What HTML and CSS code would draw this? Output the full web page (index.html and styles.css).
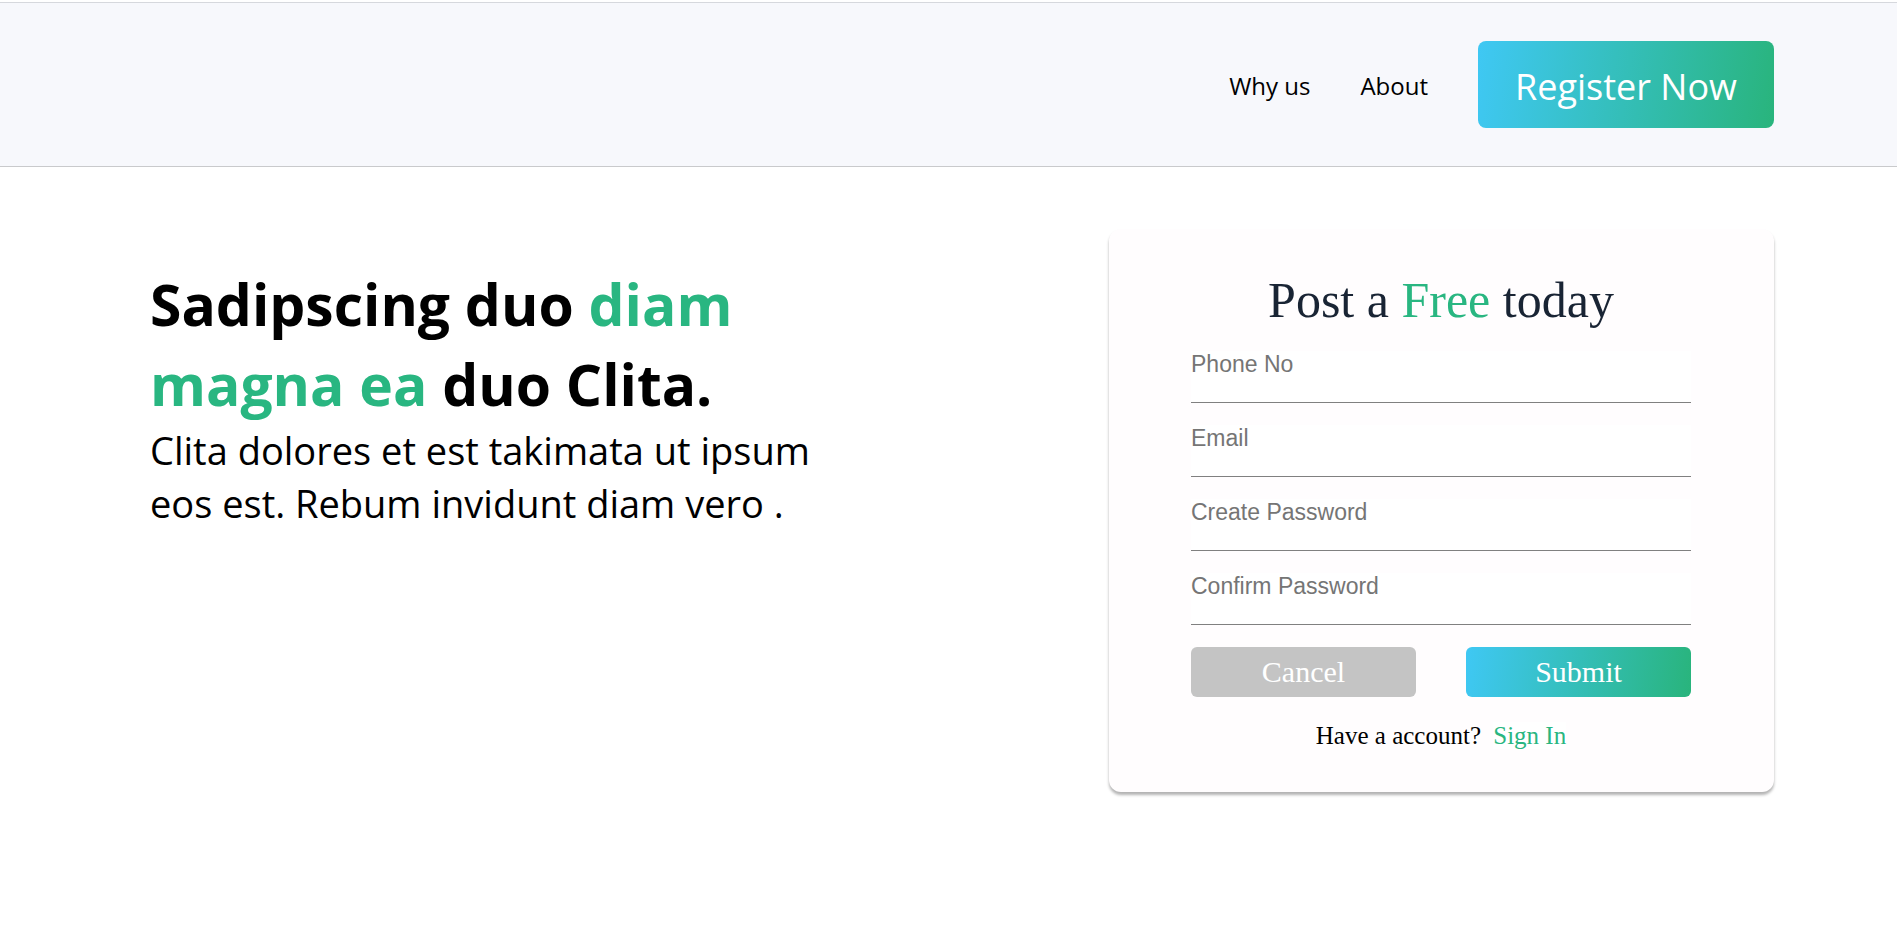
FILE: index.html
```html
<!DOCTYPE html>
<html lang="en">
<head>
<meta charset="utf-8">
<meta name="viewport" content="width=device-width, initial-scale=1">
<title>Post a Free today</title>
<link rel="stylesheet" href="styles.css">
</head>
<body>
<header class="navbar">
  <nav class="nav-links">
    <a class="nav-link" href="#why">Why us</a>
    <a class="nav-link" href="#about">About</a>
  </nav>
  <button class="register" type="button">Register Now</button>
</header>
<main class="hero">
  <section class="intro">
    <h1 class="headline">Sadipscing duo <span class="accent">diam magna ea</span> duo Clita.</h1>
    <p class="lead">Clita dolores et est takimata ut ipsum eos est. Rebum invidunt diam vero .</p>
  </section>
  <form class="card">
    <h2 class="card-title">Post a <span class="accent">Free</span> today</h2>
    <input class="field" type="tel" placeholder="Phone No" aria-label="Phone No">
    <input class="field" type="email" placeholder="Email" aria-label="Email">
    <input class="field" type="password" placeholder="Create Password" aria-label="Create Password">
    <input class="field" type="password" placeholder="Confirm Password" aria-label="Confirm Password">
    <div class="actions">
      <button class="action cancel" type="button">Cancel</button>
      <button class="action submit" type="submit">Submit</button>
    </div>
    <p class="signin">Have a account? <a class="signin-link" href="#signin">Sign In</a></p>
  </form>
</main>
</body>
</html>
```
FILE: styles.css
```css
* {
  box-sizing: border-box;
  margin: 0;
  padding: 0;
}

body {
  background: #fff;
  color: #000;
  font-family: "Segoe UI", "Open Sans", "Noto Sans", sans-serif;
  padding-top: 2px;
}

.navbar {
  display: flex;
  align-items: center;
  justify-content: flex-end;
  gap: 50px;
  padding: 38px 123px;
  background: #f7f8fc;
  border-top: 1px solid #d6d8dd;
  border-bottom: 1px solid #c9cacc;
}

.nav-links {
  display: flex;
  gap: 50px;
  padding-top: 2px;
}

.nav-link {
  color: #000;
  font-size: 24px;
  line-height: 32px;
  text-decoration: none;
}

.register {
  padding: 22px 37px 18px;
  border: 0;
  border-radius: 8px;
  background: linear-gradient(98deg, #3fc8f4, #29b47c);
  color: #fff;
  font-family: inherit;
  font-size: 36px;
  line-height: 47px;
}

.hero {
  display: flex;
  align-items: flex-start;
  justify-content: space-between;
  padding: 62px 123px 62px 150px;
}

.intro {
  width: 680px;
  padding-top: 35px;
}

.headline {
  font-size: 57px;
  font-weight: 700;
  line-height: 80px;
}

.accent {
  color: #29b681;
}

.lead {
  font-size: 38px;
  line-height: 53px;
}

.card {
  width: 665px;
  padding: 42px 83px 42px 82px;
  border-radius: 12px;
  background: #fffdfe;
  box-shadow: 0 3px 3px rgba(0, 0, 0, 0.3);
  font-family: "Liberation Serif", "Times New Roman", serif;
}

.card-title {
  margin-bottom: 22px;
  color: #192434;
  font-size: 50px;
  font-weight: 400;
  line-height: 58px;
  text-align: center;
}

.field {
  display: block;
  width: 100%;
  height: 52px;
  margin-bottom: 22px;
  padding-bottom: 25px;
  border: 0;
  border-bottom: 1px solid #808080;
  background: #fff;
  color: #000;
  font-family: "Liberation Sans", Arial, sans-serif;
  font-size: 23px;
}

.field::placeholder {
  color: #757575;
}

.actions {
  display: grid;
  grid-template-columns: 1fr 1fr;
  gap: 50px;
}

.action {
  height: 50px;
  border: 0;
  border-radius: 6px;
  color: #fff;
  font-family: inherit;
  font-size: 30px;
}

.cancel {
  background: #c4c4c4;
}

.submit {
  background: linear-gradient(98deg, #3fc8f4, #29b47c);
}

.signin {
  margin-top: 24px;
  font-size: 25px;
  line-height: 29px;
  text-align: center;
}

.signin-link {
  margin-left: 6px;
  background: #fff;
  color: #29b681;
  text-decoration: none;
}
```
